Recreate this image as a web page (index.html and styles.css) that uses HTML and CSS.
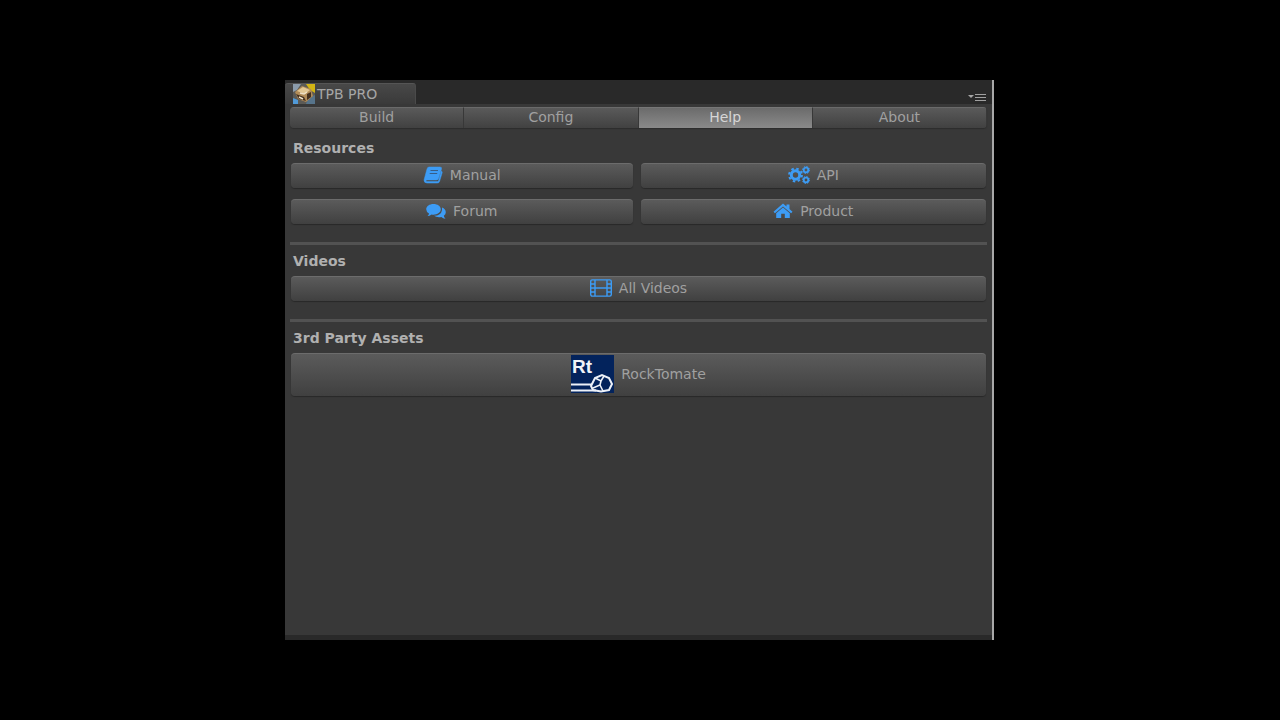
FILE: index.html
```html
<!DOCTYPE html>
<html lang="en">
<head>
    <meta charset="UTF-8">
    <meta name="viewport" content="width=device-width, initial-scale=1.0">
    <title>TPB PRO</title>
    <link rel="stylesheet" href="styles.css">
</head>
<body>
    <main class="window">
        <header class="title-bar">
            <h1 class="window-tab">
                <svg class="tab-icon" viewBox="0 0 22 20" aria-hidden="true">
                    <rect width="22" height="20" fill="#5c5a55"/>
                    <path d="M0 0h8L4 6 0 8z" fill="#8b9bab"/>
                    <path d="M13 0h9v9l-5-3z" fill="#d2b414"/>
                    <path d="M0 14l5 2v4H0z" fill="#519ad8"/>
                    <path d="M15 14l7-3v9h-9z" fill="#57748b"/>
                    <path d="M2 8l7-6 9 3 2 7-7 6-8-3z" fill="#b08b58"/>
                    <path d="M4 7l6-4 7 3-5 4z" fill="#e2c794"/>
                    <path d="M3 10l8 3 2 4-7-2zM14 10l4-2v5l-4 3z" fill="#44301f"/>
                    <path d="M7 9l4 1 3-2M6 13l4 2" stroke="#eee1c8" stroke-width="1.5" fill="none"/>
                </svg>
                TPB PRO
            </h1>
            <button class="menu-button" type="button" aria-label="Window menu">
                <svg width="18" height="8" viewBox="0 0 18 8" aria-hidden="true">
                    <path d="M0 2h6L3 5z" fill="#a5a5a5"/>
                    <path d="M7 1.500h11M7 4.500h11M7 7.500h11" stroke="#a0a0a0"/>
                </svg>
            </button>
        </header>

        <div class="content">
            <nav class="toolbar">
                <button type="button">Build</button>
                <button type="button">Config</button>
                <button type="button" class="active">Help</button>
                <button type="button">About</button>
            </nav>

            <section class="section">
                <h2>Resources</h2>
                <div class="button-grid">
                    <button class="button" type="button">
                        <svg class="icon" viewBox="0 0 20 18" aria-hidden="true">
                            <path d="M6 1h11q2 0 1.500 2l-3 9.500q-.5 1.500-2 1.500H4q-1 0-1 .8 0 .7 1 .7h10.500q.7 0 1-.8L18.300 5q1.200.5.900 1.700L16.500 15.500q-.5 1.500-2 1.500H4q-3 0-3-3L4 3q.5-2 2-2z" fill="#3d9cf5" stroke="#3d9cf5" stroke-width=".5"/>
                            <path d="M7.500 4.500h7.500M6.700 7.500h7.500" stroke="#365d86" stroke-width="1.200"/>
                        </svg>
                        Manual
                    </button>
                    <button class="button" type="button">
                        <svg class="icon icon-wide" viewBox="0 0 22 18" aria-hidden="true">
                            <g fill="none" stroke="#3d9cf5">
                                <circle cx="7.500" cy="9" r="4.200" stroke-width="3"/>
                                <circle cx="7.500" cy="9" r="6.400" stroke-width="2" stroke-dasharray="2.500 2.526"/>
                                <circle cx="18" cy="4" r="2.300" stroke-width="1.800"/>
                                <circle cx="18" cy="4" r="3.500" stroke-width="1" stroke-dasharray="1.400 1.349"/>
                                <circle cx="18" cy="14" r="2.300" stroke-width="1.800"/>
                                <circle cx="18" cy="14" r="3.500" stroke-width="1" stroke-dasharray="1.400 1.349"/>
                            </g>
                        </svg>
                        API
                    </button>
                    <button class="button" type="button">
                        <svg class="icon" viewBox="0 0 20 18" aria-hidden="true">
                            <path d="M7.500 2C11.500 2 14.800 4.200 14.800 7.300S11.500 12.700 7.500 12.700q-1 0-2-.2Q3.500 14 1.500 14q1.500-1.300 1.500-2.500Q.2 9.800.2 7.300C.2 4.200 3.500 2 7.500 2z" fill="#3d9cf5"/>
                            <path d="M16 5.500q3.800 1.500 3.800 4.700 0 2.200-2 3.600.2 1.400 1.700 2.900-2.500-.2-4.200-1.700-4.300.8-7.300-1.200 7-.2 8-5.600z" fill="#3d9cf5"/>
                        </svg>
                        Forum
                    </button>
                    <button class="button" type="button">
                        <svg class="icon" viewBox="0 0 20 18" aria-hidden="true">
                            <path d="M10 1.500l3.500 3V2.500H16.500v4.500L19.500 9.800l-1.400 1.500L10 4.500l-8.100 6.800L.5 9.800z" fill="#3d9cf5"/>
                            <path d="M10 5.500l6.800 5.700V16h-5v-4.300H8.200V16h-5v-4.800z" fill="#3d9cf5"/>
                        </svg>
                        Product
                    </button>
                </div>
            </section>

            <section class="section">
                <h2>Videos</h2>
                <button class="button" type="button">
                    <svg class="icon icon-wide" viewBox="0 0 22 18" aria-hidden="true">
                        <g fill="none" stroke="#3d9cf5" stroke-width="1.400">
                            <rect x=".7" y=".9" width="20.600" height="16.200" rx="1.500"/>
                            <path d="M5 1v16M17 1v16M5 9h12M1 5h4M1 9h4M1 13h4M17 5h4M17 9h4M17 13h4"/>
                        </g>
                    </svg>
                    All Videos
                </button>
            </section>

            <section class="section">
                <h2>3rd Party Assets</h2>
                <button class="button button-large" type="button">
                    <svg class="asset-logo" viewBox="0 0 43 38" aria-hidden="true">
                        <rect width="43" height="38" fill="#03235c"/>
                        <text class="logo-text" x="1" y="18">Rt</text>
                        <g fill="none" stroke="#edf1f8" stroke-width="2">
                            <path d="M0 29.500h21M0 35.500h25"/>
                            <path d="M20 31l4-8 7-3 7 3 3 6-3 6-8 1.500-8-1.500z"/>
                            <path d="M24 23l6 3 3-5M30 26l-1 4-7 3M29 30l3 6" stroke-width="1.600"/>
                        </g>
                    </svg>
                    RockTomate
                </button>
            </section>
        </div>
    </main>
</body>
</html>
```
FILE: styles.css
```css
* {
    box-sizing: border-box;
}

body {
    display: flex;
    min-height: 100vh;
    margin: 0;
    padding: 80px 286px 80px 285px;
    background: #000;
    color: #a0a0a0;
    font-family: "DejaVu Sans", Verdana, sans-serif;
    font-size: 14px;
    line-height: 16px;
}

h1,
h2 {
    margin: 0;
    font-size: inherit;
}

button {
    margin: 0;
    padding: 0;
    border: 0;
    color: inherit;
    font: inherit;
    cursor: pointer;
}

.window {
    display: flex;
    flex: 1;
    flex-direction: column;
    border-right: 2px solid #a8a8a8;
    background: #383838;
}

/* Title bar */
.title-bar {
    display: flex;
    justify-content: space-between;
    align-items: flex-end;
    height: 24px;
    padding-right: 6px;
    background: #292929;
}

.window-tab {
    display: flex;
    align-items: center;
    height: 21px;
    padding: 0 38px 0 8px;
    border-top: 1px solid #555;
    border-right: 1px solid #4a4a4a;
    border-radius: 3px 3px 0 0;
    background: linear-gradient(#484848, #3a3a3a);
    color: #a6a6a6;
    font-weight: normal;
}

.tab-icon {
    width: 22px;
    height: 20px;
    margin-right: 2px;
}

.menu-button {
    display: flex;
    padding-bottom: 3px;
    background: none;
}

.content {
    flex: 1;
    padding: 3px 5px;
    border-bottom: 5px solid #292929;
}

/* Toolbar */
.toolbar {
    display: grid;
    grid-template-columns: repeat(4, 1fr);
    height: 21px;
    border-radius: 4px;
    overflow: hidden;
    box-shadow: 0 1px 1px #2d2d2d;
}

.toolbar button {
    padding-bottom: 2px;
    border-top: 1px solid #6a6a6a;
    border-right: 1px solid #383838;
    background: linear-gradient(#5a5a5a, #414141);
}

.toolbar .active {
    border-top-color: #777;
    background: linear-gradient(#6b6b6b, #8a8a8a);
    color: #d6d6d6;
}

/* Sections */
.section {
    padding: 12px 1px 18px;
}

.section + .section {
    padding-top: 8px;
    border-top: 3px solid #525252;
}

.section h2 {
    margin-bottom: 7px;
    padding-left: 2px;
    color: #b0b0b0;
}

.button-grid {
    display: grid;
    grid-template-columns: 342fr 346fr;
    gap: 11px 8px;
}

.button {
    display: flex;
    justify-content: center;
    align-items: center;
    gap: 7px;
    width: 100%;
    height: 25px;
    padding-bottom: 2px;
    border-top: 1px solid #6c6c6c;
    border-radius: 4px;
    background: linear-gradient(#5b5b5b, #404040);
    box-shadow: 0 1px 1px #292929;
}

.button-large {
    height: 43px;
}

.icon {
    width: 20px;
    height: 18px;
}

.icon-wide {
    width: 22px;
}

.asset-logo {
    width: 43px;
    height: 38px;
}

.logo-text {
    fill: #f0f3f8;
    font: bold 19px "Liberation Sans", Arial, sans-serif;
}
```
